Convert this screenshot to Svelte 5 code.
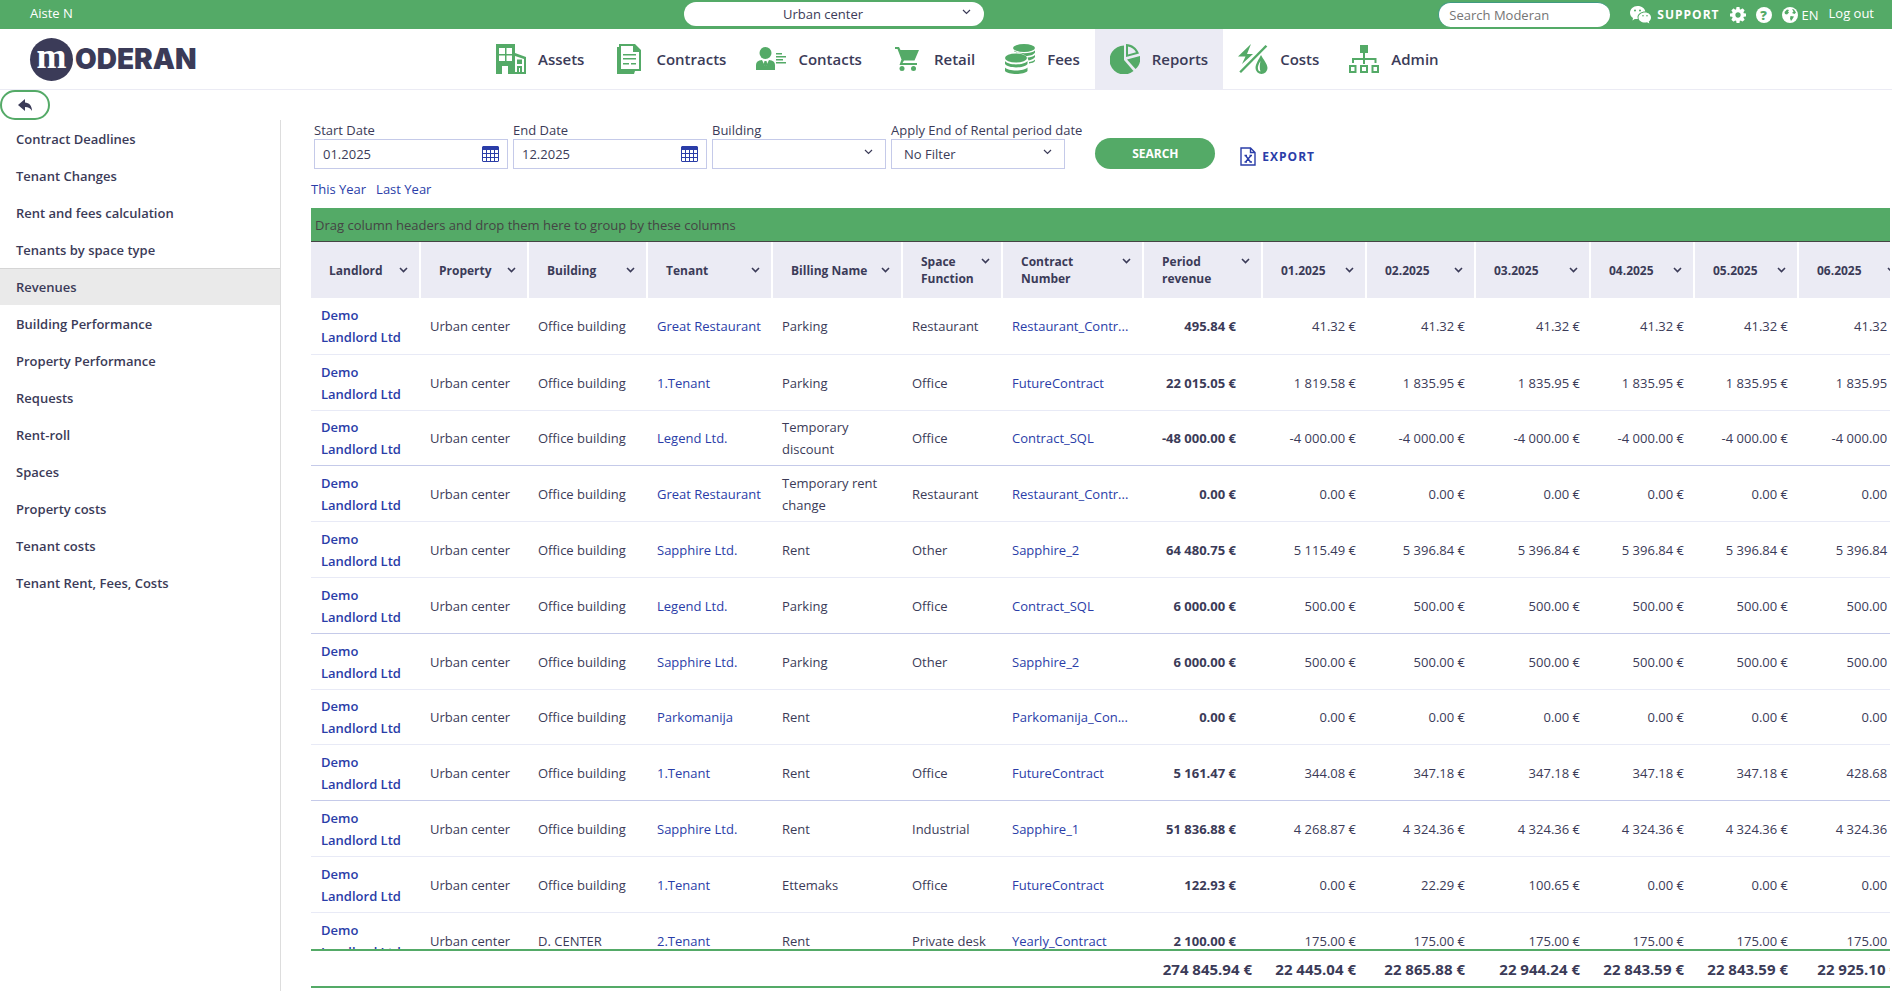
<script>
	const navItems = [
		{ name: 'Assets', icon: 'assets' },
		{ name: 'Contracts', icon: 'contracts' },
		{ name: 'Contacts', icon: 'contacts' },
		{ name: 'Retail', icon: 'retail' },
		{ name: 'Fees', icon: 'fees' },
		{ name: 'Reports', icon: 'reports' },
		{ name: 'Costs', icon: 'costs' },
		{ name: 'Admin', icon: 'admin' }
	];

	const reports = [
		'Contract Deadlines',
		'Tenant Changes',
		'Rent and fees calculation',
		'Tenants by space type',
		'Revenues',
		'Building Performance',
		'Property Performance',
		'Requests',
		'Rent-roll',
		'Spaces',
		'Property costs',
		'Tenant costs',
		'Tenant Rent, Fees, Costs'
	];

	const columns = [
		{ title: 'Landlord', width: 110 },
		{ title: 'Property', width: 108 },
		{ title: 'Building', width: 119 },
		{ title: 'Tenant', width: 125 },
		{ title: 'Billing Name', width: 130 },
		{ title: 'Space Function', width: 100 },
		{ title: 'Contract Number', width: 141 },
		{ title: 'Period revenue', width: 119 },
		{ title: '01.2025', width: 104 },
		{ title: '02.2025', width: 109 },
		{ title: '03.2025', width: 115 },
		{ title: '04.2025', width: 104 },
		{ title: '05.2025', width: 104 },
		{ title: '06.2025', width: 110 }
	];

	const same = (value) => Array(6).fill(value);

	// building, tenant, billing name, space function, contract, period revenue, months
	const rows = [
		['Office building', 'Great Restaurant', 'Parking', 'Restaurant', 'Restaurant_Contr...', '495.84', same('41.32')],
		['Office building', '1.Tenant', 'Parking', 'Office', 'FutureContract', '22 015.05', ['1 819.58', '1 835.95', '1 835.95', '1 835.95', '1 835.95', '1 835.95']],
		['Office building', 'Legend Ltd.', 'Temporary discount', 'Office', 'Contract_SQL', '-48 000.00', same('-4 000.00')],
		['Office building', 'Great Restaurant', 'Temporary rent change', 'Restaurant', 'Restaurant_Contr...', '0.00', same('0.00')],
		['Office building', 'Sapphire Ltd.', 'Rent', 'Other', 'Sapphire_2', '64 480.75', ['5 115.49', '5 396.84', '5 396.84', '5 396.84', '5 396.84', '5 396.84']],
		['Office building', 'Legend Ltd.', 'Parking', 'Office', 'Contract_SQL', '6 000.00', same('500.00')],
		['Office building', 'Sapphire Ltd.', 'Parking', 'Other', 'Sapphire_2', '6 000.00', same('500.00')],
		['Office building', 'Parkomanija', 'Rent', '', 'Parkomanija_Con...', '0.00', same('0.00')],
		['Office building', '1.Tenant', 'Rent', 'Office', 'FutureContract', '5 161.47', ['344.08', '347.18', '347.18', '347.18', '347.18', '428.68']],
		['Office building', 'Sapphire Ltd.', 'Rent', 'Industrial', 'Sapphire_1', '51 836.88', ['4 268.87', '4 324.36', '4 324.36', '4 324.36', '4 324.36', '4 324.36']],
		['Office building', '1.Tenant', 'Ettemaks', 'Office', 'FutureContract', '122.93', ['0.00', '22.29', '100.65', '0.00', '0.00', '0.00']],
		['D. CENTER', '2.Tenant', 'Rent', 'Private desk', 'Yearly_Contract', '2 100.00', same('175.00')]
	];

	const totals = ['274 845.94', '22 445.04', '22 865.88', '22 944.24', '22 843.59', '22 843.59', '22 925.10'];

	const tableWidth = columns.reduce((sum, column) => sum + column.width, 0);

	let activeNav = $state('Reports');
	let activeReport = $state('Revenues');
	let startDate = $state('01.2025');
	let endDate = $state('12.2025');
	let search = $state('');

	const setYear = (year) => {
		startDate = `01.${year}`;
		endDate = `12.${year}`;
	};
</script>

{#snippet navIcon(name)}
	<svg class="nav-icon" viewBox="0 0 30 30" aria-hidden="true">
		{#if name === 'assets'}
			<path fill-rule="evenodd" d="M0 0h19v9l11 4v17H12v-8H6v8H0zM3 4v6h6V4zM10.500 4v6H16V4zM3 11.500V17h6v-5.500zM10.500 11.500V17H16v-5.500zM19 12v16h9V15zM21 15.500h5V20h-5zM21 22h5v6h-2v-4h-1v4h-2z" />
		{:else if name === 'contracts'}
			<path d="M3 3h3v23h15v1l-1 3H3z" />
			<path fill-rule="evenodd" d="M5 0h16l6 6v21H5zM7 2v23h18V8h-6V2z" />
			<path d="M9 10h13v1.500H9zM9 14h13v1.500H9zM9 19h6v1.500H9zM17 19h5v1.500h-5z" />
		{:else if name === 'contacts'}
			<circle cx="9.500" cy="9" r="6" />
			<path d="M0 26v-5c0-3 2-4.500 6-5l3.500 7L13 16c4 .5 6 2 6 5v5z" />
			<path d="M8.500 17h2l.8 3-1.800 4-1.800-4z" />
			<path d="M20 9h6v1.500h-6zM20 12h10v1.500H20zM20 15h7v1.500h-7zM20 18h10v1.500H20z" />
		{:else if name === 'retail'}
			<path d="M3 3h4l1.500 3H27l-4.500 10.500H12L10.500 19H25v2H7.500l2-5.500L5.500 5H3z" />
			<circle cx="10" cy="24.500" r="2.500" />
			<circle cx="21.500" cy="24.500" r="2.500" />
		{:else if name === 'fees'}
			<ellipse cx="19" cy="4" rx="11" ry="4" />
			<path d="M9 6.500c4 3.500 17 3.500 21 0v2c-1 2.500-6 3.500-9 3.500-2-2-5-3-9-3.500-2-.5-3-1-3-2z" />
			<path d="M22.500 13.500c3 0 6-1 7.500-2.500v2c-1 2-4 3-6.500 3.500zM24 18c2 0 5-1 6-2.500v1.500c-1 1.500-3 2-6 2.500z" />
			<ellipse cx="11" cy="14" rx="11" ry="4.500" />
			<path d="M0 17c3 4.500 19 4.500 22.500 0v3c-3 4.500-19.500 4.500-22.500 0z" />
			<path d="M0 23.500c3 4 19 4 22.500 0V27c-3 4-19.500 4-22.500 0z" />
		{:else if name === 'reports'}
			<path d="M14 1.500V16l9.500 11A14.500 14.500 0 1 1 14 1.500z" />
			<path fill-rule="evenodd" d="M16 0c6 0 11 4 13 9.500L16 13zM18 2.500v8L26 8.300A11 11 0 0 0 18 2.500z" />
			<path d="M17 15.500l13-3.500c1 5.500-1 10-4.500 13z" />
		{:else if name === 'costs'}
			<path d="M13 0L0 12.500h7.500L4 20l11-10H9z" />
			<path d="M27.500 1l1.800 1.500L3 29l-1.700-1.500z" />
			<path fill-rule="evenodd" d="M23 11c2 4 6.500 9 6.500 13a6 6 0 0 1-12 0c0-4 3.500-9 5.500-13zm-.5 6c-2 3-3 6-2.500 8 .3 1.500 1 2.300 2.500 2.500-1-3-1-6 0-10.500z" />
		{:else}
			<path d="M11 1h8v8h-8zM14 9h2v5h11.500v5h-2v-3H16v4h-2v-4H5v3H3v-5h11z" />
			<path fill-rule="evenodd" d="M0 21h7.500v8H0zm2 2v4h3.500v-4zM11 21h8v8h-8zm2 2v4h4v-4zM22.500 21H30v8h-7.500zm2 2v4H28v-4z" />
		{/if}
	</svg>
{/snippet}

{#snippet chevron()}
	<svg class="chevron" viewBox="0 0 9 6" aria-hidden="true"><path d="M1 1l3.500 3.500L8 1" /></svg>
{/snippet}

{#snippet calendar()}
	<svg class="calendar" viewBox="0 0 17 16" aria-hidden="true">
		<path fill-rule="evenodd" d="M1 0h15l1 1v14l-1 1H1l-1-1V1zM1 4v3h3V4zM5 4v3h3V4zM9 4v3h3V4zM13 4v3h3V4zM1 8v3h3V8zM5 8v3h3V8zM9 8v3h3V8zM13 8v3h3V8zM1 12v3h3v-3zM5 12v3h3v-3zM9 12v3h3v-3zM13 12v3h3v-3z" />
	</svg>
{/snippet}

<div class="app">
	<div class="topbar">
		<span class="user">Aiste N</span>
		<div class="select property-select">
			<select aria-label="Property">
				<option>Urban center</option>
			</select>
			{@render chevron()}
		</div>
		<div class="tools">
			<input type="search" placeholder="Search Moderan" aria-label="Search Moderan" bind:value={search} />
			<a class="support" href="#support">
				<svg viewBox="0 0 21 18" aria-hidden="true">
					<path fill-rule="evenodd" d="M7.500 0C12 0 15 2.500 15.300 5.500 11 5.500 7.500 8 7.500 11l.3 2-3 0L2.500 14.500 3 12C1 10.800 0 9 0 6.800 0 3 3.300 0 7.500 0zM5 3.500a1 1 0 1 0 0 2 1 1 0 0 0 0-2zM10 3.500a1 1 0 1 0 0 2 1 1 0 0 0 0-2z" />
					<path fill-rule="evenodd" d="M15 6.500c3.500 0 6 2.300 6 5 0 1.700-.8 3-2.200 4l.5 2-2.300-1.200c-4.500 1-8.500-1.300-8.500-4.800 0-2.800 3-5 6.500-5zM13 9a.8.8 0 1 0 0 1.600A.8.8 0 0 0 13 9zM17 9a.8.8 0 1 0 0 1.600A.8.8 0 0 0 17 9z" />
				</svg>
				SUPPORT
			</a>
			<a class="round" href="#settings" aria-label="Settings">
				<svg viewBox="0 128 1536 1536" aria-hidden="true">
					<path d="M1024 896q0-106-75-181t-181-75-181 75-75 181 75 181 181 75 181-75 75-181zm512-109v222q0 12-8 23t-20 13l-185 28q-19 54-39 91 35 50 107 138 10 12 10 25t-9 23q-27 37-99 108t-94 71q-12 0-26-9l-138-108q-44 23-91 38-16 136-29 186-7 28-36 28h-222q-14 0-24.500-8.500t-11.500-21.500l-28-184q-49-16-90-37l-141 107q-10 9-25 9-14 0-25-11-126-114-165-168-7-10-7-23 0-12 8-23 15-21 51-66.500t54-70.500q-27-50-41-99l-183-27q-13-2-21-12.500t-8-23.500v-222q0-12 8-23t19-13l186-28q14-46 39-92-40-57-107-138-10-12-10-24 0-10 9-23 26-36 98.500-107.500t94.500-71.500q13 0 26 10l138 107q44-23 91-38 16-136 29-186 7-28 36-28h222q14 0 24.500 8.500t11.500 21.500l28 184q49 16 90 37l142-107q9-9 24-9 13 0 25 10 129 119 165 170 7 8 7 22 0 12-8 23-15 21-51 66.500t-54 70.500q26 50 41 98l183 28q13 2 21 12.500t8 23.500z" />
				</svg>
			</a>
			<a class="round" href="#help" aria-label="Help">
				<span class="help">?</span>
			</a>
			<a class="round language" href="#language">
				<svg viewBox="0 0 16 16" aria-hidden="true">
					<circle cx="8" cy="8" r="8" />
					<path class="land" d="M2.500 5L5 2.500l2 .5-1 1.500 1 1-2 2-2-.5zM10 2l2 .5 2 3-1.500 1.500L10 6l1.500-1.500zM8.500 9l3.500.5L10.500 12 9 14l-1-2.500z" />
				</svg>
				EN
			</a>
			<a class="logout" href="#logout">Log out</a>
		</div>
	</div>

	<header>
		<a class="logo" href="#home" aria-label="Moderan">
			<span class="logo-mark">m</span><span class="logo-text">ODERAN</span>
		</a>
		<nav>
			{#each navItems as item}
				<a
					href={`#${item.icon}`}
					class={activeNav === item.name ? 'active' : ''}
					onclick={() => (activeNav = item.name)}
				>
					{@render navIcon(item.icon)}
					{item.name}
				</a>
			{/each}
		</nav>
	</header>

	<button class="back" aria-label="Back">
		<svg viewBox="0 0 14 12" aria-hidden="true">
			<path d="M0 6l7-6v3.500c4 .3 7 3 7 8.500-1.500-2.500-3.500-4-7-4V12z" />
		</svg>
	</button>

	<div class="layout">
		<aside>
			{#each reports as report}
				<a
					href="#report"
					class={activeReport === report ? 'active' : ''}
					onclick={() => (activeReport = report)}>{report}</a
				>
			{/each}
		</aside>

		<main>
			<form class="filters" onsubmit={(event) => event.preventDefault()}>
				<div class="field">
					<label for="start">Start Date</label>
					<div class="date">
						<input id="start" type="text" bind:value={startDate} />
						{@render calendar()}
					</div>
				</div>
				<div class="field">
					<label for="end">End Date</label>
					<div class="date">
						<input id="end" type="text" bind:value={endDate} />
						{@render calendar()}
					</div>
				</div>
				<div class="field">
					<label for="building">Building</label>
					<div class="select">
						<select id="building"><option></option></select>
						{@render chevron()}
					</div>
				</div>
				<div class="field">
					<label for="rental">Apply End of Rental period date</label>
					<div class="select">
						<select id="rental"><option>No Filter</option></select>
						{@render chevron()}
					</div>
				</div>
				<button class="search" type="submit">SEARCH</button>
				<a class="export" href="#export">
					<svg viewBox="0 0 16 19" aria-hidden="true">
						<path d="M1 1h9.500L15 5.500V18H1zM10.500 1v4.500H15" />
						<path d="M4.500 8.500h2.500M9.500 8.500H12M4.500 15h2.500M9.500 15H12M5.500 8.500l5 6.500M11 8.500L5.500 15" />
					</svg>
					EXPORT
				</a>
			</form>

			<div class="periods">
				<a href="#this-year" onclick={() => setYear(2025)}>This Year</a>
				<a href="#last-year" onclick={() => setYear(2024)}>Last Year</a>
			</div>

			<div class="group-bar">Drag column headers and drop them here to group by these columns</div>

			<div class="grid">
				<table style={`width: ${tableWidth}px`}>
					<colgroup>
						{#each columns as column}
							<col style={`width: ${column.width}px`} />
						{/each}
					</colgroup>
					<thead>
						<tr>
							{#each columns as column}
								<th scope="col">
									<div class="heading">
										<span>{column.title}</span>
										{@render chevron()}
									</div>
								</th>
							{/each}
						</tr>
					</thead>
					<tbody>
						{#each rows as [building, tenant, billing, space, contract, revenue, months]}
							<tr>
								<td class="landlord"><a href="#landlord">Demo Landlord Ltd</a></td>
								<td>Urban center</td>
								<td>{building}</td>
								<td><a href="#tenant">{tenant}</a></td>
								<td class="billing">{billing}</td>
								<td class="space">{space}</td>
								<td><a href="#contract">{contract}</a></td>
								<td class="number revenue">{revenue} €</td>
								{#each months as month}
									<td class="number">{month} €</td>
								{/each}
							</tr>
						{/each}
					</tbody>
					<tfoot>
						<tr>
							<td colspan="7"></td>
							{#each totals as total}
								<td class="number">{total} €</td>
							{/each}
						</tr>
					</tfoot>
				</table>
			</div>
		</main>
	</div>
</div>

<style>
	:global(body) {
		background: #fff;
	}

	.app {
		--green: #54aa67;
		--ink: #3b3b58;
		--blue: #2a3da8;
		--pale: #ebebf4;
		display: flex;
		flex-direction: column;
		min-height: 100vh;
		overflow: hidden;
		font-family: 'Open Sans', 'Noto Sans', sans-serif;
		font-size: 13px;
		color: var(--ink);
	}

	.app * {
		box-sizing: border-box;
	}

	a {
		color: var(--blue);
		text-decoration: none;
	}

	input,
	select,
	button {
		font: inherit;
		color: inherit;
		outline: none;
	}

	.topbar {
		display: grid;
		grid-template-columns: 654px 300px 1fr;
		align-items: start;
		height: 29px;
		padding: 2px 18px 0 30px;
		background: var(--green);
		color: #fff;
	}

	.topbar a {
		color: #fff;
	}

	.user {
		line-height: 22px;
	}

	.select {
		position: relative;
		width: 174px;
	}

	.select select {
		width: 100%;
		height: 30px;
		padding: 0 12px;
		border: 1px solid #c5cae9;
		border-radius: 0;
		background: #fff;
		appearance: none;
	}

	.chevron {
		flex: none;
		width: 9px;
		height: 6px;
		fill: none;
		stroke: var(--ink);
		stroke-width: 1.2;
	}

	.select .chevron {
		position: absolute;
		right: 13px;
		top: 10px;
		pointer-events: none;
	}

	.property-select {
		width: 100%;
	}

	.property-select select {
		height: 24px;
		padding: 0 34px 0 12px;
		border: 0;
		border-radius: 12px;
		color: var(--ink);
		text-align-last: center;
	}

	.property-select .chevron {
		top: 7px;
	}

	.tools {
		display: flex;
		justify-content: flex-end;
		align-items: center;
		gap: 10px;
		line-height: 20px;
	}

	.tools input {
		width: 172px;
		height: 25px;
		margin-right: 10px;
		padding: 0 10px;
		border: 1px solid #3f9a82;
		border-width: 1px 0 0 1px;
		border-radius: 13px;
		background: #fff;
	}

	.tools input::placeholder {
		color: #757575;
	}

	.tools a {
		height: 23px;
	}

	.tools svg {
		fill: #fff;
	}

	.support {
		display: flex;
		align-items: center;
		gap: 6px;
		font-size: 12px;
		font-weight: 700;
		letter-spacing: 1px;
	}

	.support svg {
		width: 21px;
		height: 18px;
	}

	.round {
		display: flex;
		align-items: center;
		gap: 4px;
	}

	.round svg {
		width: 16px;
		height: 16px;
	}

	.help {
		width: 16px;
		height: 16px;
		border-radius: 50%;
		background: #fff;
		color: var(--green);
		font-weight: 800;
		line-height: 16px;
		text-align: center;
	}

	.land {
		fill: var(--green);
	}

	header {
		display: flex;
		height: 61px;
		border-bottom: 1px solid var(--pale);
	}

	.logo {
		display: flex;
		align-items: center;
		gap: 2px;
		width: 451px;
		margin-left: 30px;
		color: var(--ink);
	}

	.logo-mark {
		width: 43px;
		height: 43px;
		border-radius: 50%;
		background: var(--ink);
		color: #fff;
		font: 700 36px/36px 'Liberation Serif', serif;
		text-align: center;
	}

	.logo-text {
		font: 900 28px/43px Inter, sans-serif;
	}

	nav {
		display: flex;
	}

	nav a {
		display: flex;
		align-items: center;
		gap: 12px;
		padding: 0 15px;
		color: var(--ink);
		font-size: 15px;
		font-weight: 600;
	}

	nav a.active {
		background: var(--pale);
	}

	.nav-icon {
		width: 30px;
		height: 30px;
		fill: var(--green);
	}

	.back {
		width: 50px;
		height: 30px;
		padding: 0;
		border: 2px solid var(--green);
		border-radius: 15px;
		background: #fff;
	}

	.back svg {
		display: block;
		width: 14px;
		height: 12px;
		margin: 0 auto;
		fill: var(--ink);
	}

	.layout {
		display: flex;
		flex: 1;
	}

	aside {
		flex: none;
		width: 281px;
		border-right: 1px solid #ddd;
	}

	aside a {
		display: block;
		height: 37px;
		padding-left: 16px;
		border-top: 1px solid transparent;
		color: var(--ink);
		font-weight: 600;
		line-height: 36px;
	}

	aside a.active {
		border-top-color: #d5d5d5;
		background: #eaeaea;
	}

	main {
		flex: 1;
		min-width: 0;
		padding: 0 2px 0 30px;
	}

	.filters {
		display: flex;
		align-items: flex-end;
		gap: 5px;
		padding-left: 3px;
	}

	.field label {
		display: block;
		padding-top: 1px;
		line-height: 18px;
	}

	.date {
		display: flex;
		align-items: center;
		width: 194px;
		height: 30px;
		padding: 0 8px;
		border: 1px solid #c5cae9;
	}

	.date input {
		flex: 1;
		min-width: 0;
		padding: 0;
		border: 0;
		background: none;
	}

	.calendar {
		width: 17px;
		height: 16px;
		fill: var(--blue);
	}

	.search {
		width: 120px;
		height: 31px;
		margin-left: 8px;
		border: 0;
		border-radius: 16px;
		background: var(--green);
		color: #fff;
		font-size: 12px;
		font-weight: 700;
	}

	.export {
		display: flex;
		align-items: center;
		gap: 6px;
		height: 26px;
		margin-left: 20px;
		font-size: 12px;
		font-weight: 700;
		letter-spacing: 1px;
	}

	.export svg {
		width: 16px;
		height: 19px;
		fill: none;
		stroke: var(--blue);
		stroke-width: 1.4;
	}

	.periods {
		display: flex;
		gap: 10px;
		padding: 10px 0 9px;
		line-height: 20px;
	}

	.group-bar {
		height: 34px;
		padding-left: 4px;
		border-bottom: 1px solid #444;
		background: var(--green);
		color: #444;
		line-height: 34px;
	}

	.grid {
		height: calc(100vh - 245px);
		overflow: auto;
		scrollbar-width: none;
	}

	table {
		table-layout: fixed;
		border-collapse: separate;
		border-spacing: 0;
	}

	thead {
		position: sticky;
		top: 0;
	}

	th {
		height: 56px;
		padding: 0 11px 0 18px;
		border-right: 2px solid #fff;
		background: var(--pale);
		font-size: 12px;
		font-weight: 700;
		line-height: 17px;
		text-align: left;
	}

	.heading {
		display: flex;
		justify-content: space-between;
	}

	.heading .chevron {
		margin-top: 5px;
		stroke-width: 1.6;
	}

	tbody td {
		height: 56px;
		padding: 0 0 0 9px;
		border-bottom: 1px solid #e8eaf6;
		line-height: 22px;
	}

	tbody tr:first-child td {
		height: 57px;
	}

	tbody tr:nth-child(5n + 3) td {
		height: 55px;
	}

	tbody tr:nth-child(3n) td {
		border-color: #c5cae9;
	}

	tbody .landlord {
		padding: 0 10px;
		font-weight: 600;
	}

	tbody .billing {
		padding-right: 18px;
	}

	td.number {
		padding: 0 11px 0 0;
		text-align: right;
		white-space: nowrap;
	}

	tbody td.revenue {
		padding-right: 27px;
		font-weight: 700;
	}

	tfoot {
		position: sticky;
		bottom: 0;
	}

	tfoot td {
		height: 39px;
		padding: 0;
		border: solid var(--green);
		border-width: 2px 0;
		background: #fff;
		font-size: 15px;
		font-weight: 700;
	}
</style>
